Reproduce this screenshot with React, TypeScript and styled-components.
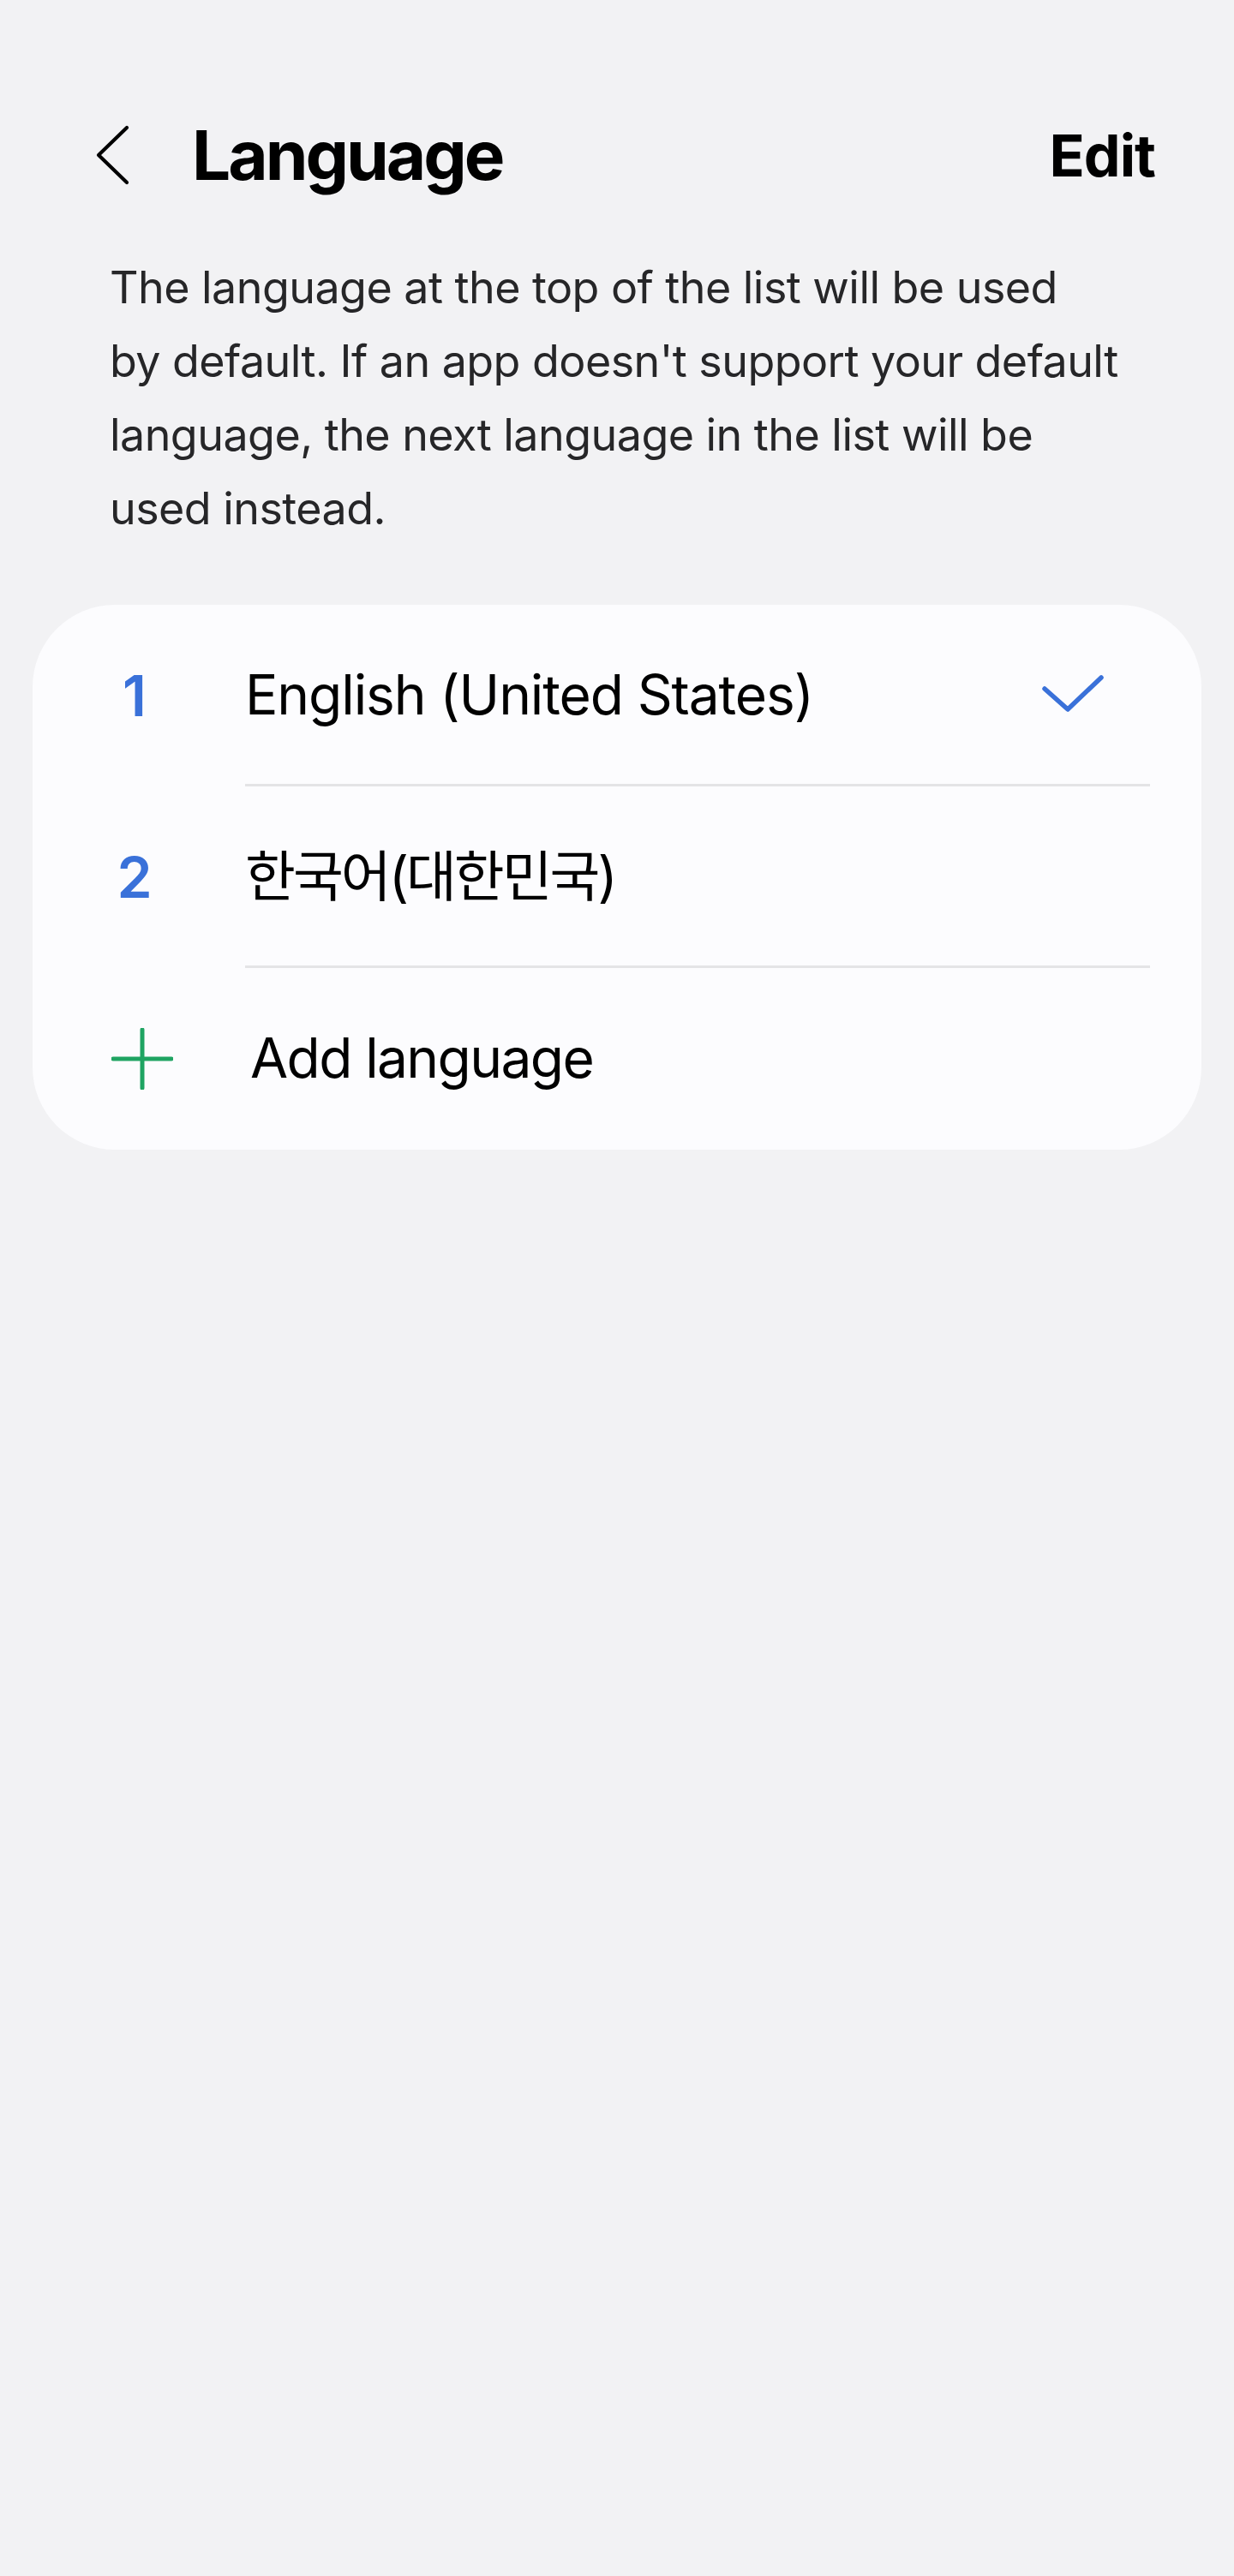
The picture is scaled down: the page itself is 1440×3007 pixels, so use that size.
import React from "react";
import styled, { createGlobalStyle } from "styled-components";

interface ILanguage {
  id: number;
  name: string;
  isDefault: boolean;
  tracking: number;
}

const languages: ILanguage[] = [
  { id: 1, name: "English (United States)", isDefault: true, tracking: -1.1 },
  { id: 2, name: "한국어(대한민국)", isDefault: false, tracking: -3 },
];

const descriptionLines = [
  "The language at the top of the list will be used",
  "by default. If an app doesn't support your default",
  "language, the next language in the list will be",
  "used instead.",
];

const App: React.FC = () => {
  return (
    <>
      <GlobalStyle />
      <Page>
        <Header>
          <BackButton aria-label="Back">
            <svg width="40" height="72" viewBox="0 0 40 72" fill="none">
              <path
                d="M37 4 L4 36 L37 68"
                stroke="#000"
                strokeWidth="4.2"
                strokeLinecap="round"
                strokeLinejoin="round"
              />
            </svg>
          </BackButton>
          <Title>Language</Title>
          <EditButton>Edit</EditButton>
        </Header>

        <Description>
          {descriptionLines.map((line) => (
            <DescriptionLine key={line}>{line}</DescriptionLine>
          ))}
        </Description>

        <Card>
          {languages.map((language) => (
            <Row key={language.id}>
              <Lead>
                <OrderNumber>{language.id}</OrderNumber>
              </Lead>
              <Body $divider>
                <ItemText $tracking={language.tracking}>{language.name}</ItemText>
                {language.isDefault && (
                  <CheckIcon width="80" height="50" viewBox="0 0 80 50" fill="none">
                    <path
                      d="M7 18 L34 42 L73 5"
                      stroke="#3a71d9"
                      strokeWidth="5.5"
                      strokeLinecap="round"
                      strokeLinejoin="round"
                    />
                  </CheckIcon>
                )}
              </Body>
            </Row>
          ))}
          <Row>
            <Lead>
              <PlusIcon width="72" height="72" viewBox="0 0 72 72" fill="none">
                <path
                  d="M36 2 L36 70 M2 36 L70 36"
                  stroke="#1fa462"
                  strokeWidth="5"
                  strokeLinecap="round"
                />
              </PlusIcon>
            </Lead>
            <Body>
              <ItemText $inset={6} $tracking={-1.6}>
                Add language
              </ItemText>
            </Body>
          </Row>
        </Card>
      </Page>
    </>
  );
};

const GlobalStyle = createGlobalStyle`
  html, body {
    margin: 0;
    padding: 0;
    background: #f2f2f4;
  }

  body {
    font-family: Inter, "Noto Sans", "Noto Sans CJK KR", sans-serif;
    -webkit-font-smoothing: antialiased;
  }

  * {
    box-sizing: border-box;
  }
`;

const Page = styled.main`
  min-height: 3007px;
  background: #f2f2f4;
  padding-top: 106px;
  display: flex;
  flex-direction: column;
`;

const Header = styled.header`
  height: 150px;
  display: flex;
  align-items: center;
  padding: 0 92px 0 111px;
`;

const BackButton = styled.button`
  display: flex;
  align-items: center;
  padding: 0;
  border: none;
  background: none;
  cursor: pointer;
`;

const Title = styled.h1`
  margin: 0 0 0 73px;
  font-size: 80px;
  line-height: 1;
  font-weight: 700;
  letter-spacing: -3px;
  color: #000;
`;

const EditButton = styled.button`
  margin-left: auto;
  padding: 0;
  border: none;
  background: none;
  font-family: inherit;
  font-size: 68px;
  line-height: 1;
  font-weight: 700;
  letter-spacing: -1px;
  color: #000;
  cursor: pointer;
`;

const Description = styled.p`
  margin: 37px 0 0;
  padding-left: 128px;
  font-size: 52px;
  line-height: 86px;
  letter-spacing: -0.55px;
  color: #262628;
`;

const DescriptionLine = styled.span`
  display: block;
  white-space: nowrap;
`;

const Card = styled.section`
  margin: 69px 38px 0;
  background: #fcfcfe;
  border-radius: 96px;
  display: flex;
  flex-direction: column;
`;

const Row = styled.div`
  height: 212px;
  display: grid;
  grid-template-columns: 248px 1fr;
`;

const Lead = styled.div`
  display: flex;
  align-items: center;
  justify-content: center;
  padding-right: 10px;
`;

const Body = styled.div<{ $divider?: boolean }>`
  display: flex;
  align-items: center;
  justify-content: space-between;
  margin-right: 60px;
  border-bottom: 3px solid
    ${({ $divider }) => ($divider ? "#e4e4e6" : "transparent")};
`;

const OrderNumber = styled.span`
  font-size: 66px;
  line-height: 1;
  font-weight: 600;
  color: #3a71d9;
`;

const ItemText = styled.span<{ $inset?: number; $tracking?: number }>`
  padding-left: ${({ $inset }) => $inset ?? 0}px;
  font-size: 64px;
  line-height: 1;
  letter-spacing: ${({ $tracking }) => $tracking ?? 0}px;
  color: #000;
`;

const CheckIcon = styled.svg`
  margin-right: 50px;
`;

const PlusIcon = styled.svg`
  margin-left: 18px;
`;

export default App;
